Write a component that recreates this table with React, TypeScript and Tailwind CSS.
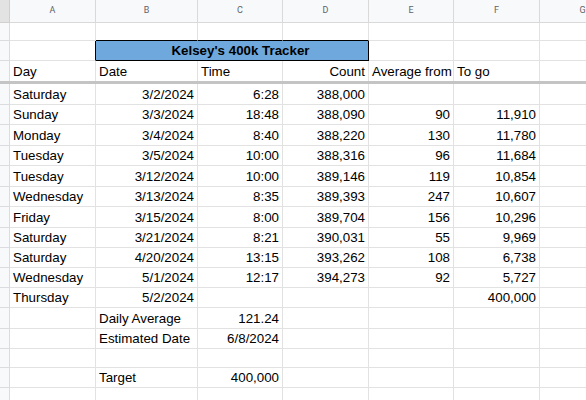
const COL_W = ["w-[86px]", "w-[102px]", "w-[85px]", "w-[86px]", "w-[85px]", "w-[86px]", "w-[86px]"];
const LETTERS = ["A", "B", "C", "D", "E", "F", "G"];

// align per column for numbers: A left, rest right
const DATA = [
  ["Saturday", "3/2/2024", "6:28", "388,000", "", ""],
  ["Sunday", "3/3/2024", "18:48", "388,090", "90", "11,910"],
  ["Monday", "3/4/2024", "8:40", "388,220", "130", "11,780"],
  ["Tuesday", "3/5/2024", "10:00", "388,316", "96", "11,684"],
  ["Tuesday", "3/12/2024", "10:00", "389,146", "119", "10,854"],
  ["Wednesday", "3/13/2024", "8:35", "389,393", "247", "10,607"],
  ["Friday", "3/15/2024", "8:00", "389,704", "156", "10,296"],
  ["Saturday", "3/21/2024", "8:21", "390,031", "55", "9,969"],
  ["Saturday", "4/20/2024", "13:15", "393,262", "108", "6,738"],
  ["Wednesday", "5/1/2024", "12:17", "394,273", "92", "5,727"],
  ["Thursday", "5/2/2024", "", "", "", "400,000"],
];

const SUMMARY = [
  ["Daily Average", "121.24"],
  ["Estimated Date", "6/8/2024"],
  ["", ""],
  ["Target", "400,000"],
  ["", ""],
];

// row heights incl. bottom border
const DATA_H = ["h-[21px]", "h-[20px]", "h-[21px]", "h-[20px]", "h-[21px]", "h-[20px]", "h-[21px]", "h-[20px]", "h-[20px]", "h-[20px]", "h-[20px]"];
const SUM_H = ["h-[21px]", "h-[20px]", "h-[19px]", "h-[20px]", "h-[20px]"];

function Cell({ w, text = "", right = false, extra = "" }: { w: string; text?: string; right?: boolean; extra?: string }) {
  return (
    <div
      className={`${w} shrink-0 border-r border-b border-[#e2e2e2] flex items-end px-[3px] pb-[2px] leading-[15px] whitespace-nowrap overflow-hidden ${right ? "justify-end" : "justify-start"} ${extra}`}
    >
      {text}
    </div>
  );
}

function RowHead({ extra = "" }: { extra?: string }) {
  return <div className={`w-[10px] shrink-0 bg-[#f8f9fa] border-r border-b border-[#dadce0] ${extra}`} />;
}

export default function App() {
  return (
    <div
      className="w-[586px] h-[400px] overflow-hidden bg-white text-[13.33px] text-black"
      style={{ fontFamily: '"Liberation Sans", Arial, sans-serif' }}
    >
      {/* column letters */}
      <div className="flex h-[23px]">
        <div className="w-[10px] shrink-0 bg-[#e3e3e3] border-r border-b border-[#d0d0d0]" />
        {LETTERS.map((l, i) => (
          <div
            key={l}
            className={`${COL_W[i]} shrink-0 bg-[#f8f9fa] border-r border-b border-[#d9d9d9] flex items-center justify-center text-[9px] text-[#5f6368] font-['Roboto',sans-serif]`}
          >
            {l}
          </div>
        ))}
      </div>

      {/* row 1 */}
      <div className="flex h-[18px]">
        <RowHead />
        <Cell w={COL_W[0]} />
        <Cell w={COL_W[1]} extra="border-b-black" />
        <Cell w={COL_W[2]} extra="border-b-black" />
        <Cell w={COL_W[3]} extra="border-b-black" />
        <Cell w={COL_W[4]} />
        <Cell w={COL_W[5]} />
        <Cell w={COL_W[6]} />
      </div>

      {/* row 2: title */}
      <div className="flex h-[20px]">
        <RowHead />
        <Cell w={COL_W[0]} extra="border-r-black" />
        <div className="w-[273px] shrink-0 bg-[#6fa8dc] border-r border-b border-black flex items-end justify-center pl-[17px] pb-[2px] leading-[15px] font-bold">
          Kelsey's 400k Tracker
        </div>
        <Cell w={COL_W[4]} />
        <Cell w={COL_W[5]} />
        <Cell w={COL_W[6]} />
      </div>

      {/* row 3: headers, frozen line below */}
      <div className="flex h-[23px] border-b-[3px] border-[#c4c4c4]">
        <div className="w-[10px] shrink-0 bg-[#f8f9fa] border-r border-[#dadce0]" />
        {["Day", "Date", "Time", "Count", "Average from", "To go", ""].map((t, i) => (
          <div
            key={i}
            className={`${COL_W[i]} shrink-0 border-r border-[#e2e2e2] flex items-end px-[3px] pb-[2px] leading-[15px] whitespace-nowrap ${i === 3 ? "justify-end" : "justify-start"}`}
          >
            {t}
          </div>
        ))}
      </div>

      {/* data */}
      {DATA.map((r, ri) => (
        <div key={ri} className={`flex ${DATA_H[ri]}`}>
          <RowHead />
          {r.map((t, i) => (
            <Cell key={i} w={COL_W[i]} text={t} right={i > 0} />
          ))}
          <Cell w={COL_W[6]} />
        </div>
      ))}

      {/* summary */}
      {SUMMARY.map(([label, value], ri) => (
        <div key={ri} className={`flex ${SUM_H[ri]}`}>
          <RowHead />
          <Cell w={COL_W[0]} />
          <Cell w={COL_W[1]} text={label} />
          <Cell w={COL_W[2]} text={value} right />
          <Cell w={COL_W[3]} />
          <Cell w={COL_W[4]} />
          <Cell w={COL_W[5]} />
          <Cell w={COL_W[6]} />
        </div>
      ))}
    </div>
  );
}
